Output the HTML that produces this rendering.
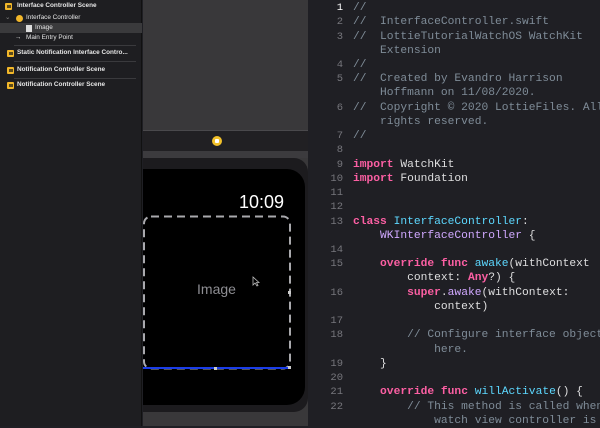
<!DOCTYPE html>
<html><head><meta charset="utf-8"><style>
*{margin:0;padding:0;box-sizing:border-box}
body{width:600px;height:426px;overflow:hidden;background:#1f1f24;position:relative;font-family:"Liberation Sans",sans-serif}
.side{position:absolute;left:0;top:0;width:142px;height:426px;background:#1e1e21;border-right:1px solid #111}
.row{position:absolute;left:0;width:142px;height:10px;font-size:6.4px;color:#e6e6e6;line-height:10px;white-space:nowrap;font-weight:bold}
.ic{position:absolute;width:7px;height:7px;top:1.5px;background:#f2b72a;border-radius:1px}
.ic::after{content:"";position:absolute;left:1.5px;top:2px;width:4px;height:3px;background:#5b4a1a}
.sep{position:absolute;left:14px;width:122px;height:1px;background:#3a3a3d}
.canvas{position:absolute;left:143px;top:0;width:165px;height:426px;background:#39383a}
.code{position:absolute;left:309px;top:1px;width:291px;height:426px;background:#1f1f24;font-family:"Liberation Mono",monospace;font-size:11.27px;color:#dfdfe0}
.l{position:absolute;left:0;height:14.23px;line-height:14.23px;white-space:pre}
.n{position:absolute;width:34px;text-align:right;color:#76767c;font-size:10.5px}
.c{color:#7f8c98}.k{color:#fc5fa3;font-weight:bold}.t{color:#5dd8ff}.p{color:#d0a8ff}.f{color:#67b7a4}
</style></head><body>
<div class="side">
 <div class="row" style="top:1px"><span class="ic" style="left:5px"></span><span style="position:absolute;left:17px">Interface Controller Scene</span></div>
 <div class="row" style="top:13px;font-weight:normal"><span style="position:absolute;left:5px;color:#888">⌄</span><span style="position:absolute;left:16px;top:1.5px;width:7px;height:7px;border-radius:50%;background:#f2b72a"></span><span style="position:absolute;left:26px">Interface Controller</span></div>
 <div class="row" style="top:23px;background:#3a3a3c;font-weight:normal"><span style="position:absolute;left:26px;top:1.5px;width:6px;height:7px;background:#ddd"></span><span style="position:absolute;left:35px">Image</span></div>
 <div class="row" style="top:33px;font-weight:normal"><span style="position:absolute;left:15px">→</span><span style="position:absolute;left:26px">Main Entry Point</span></div>
 <div class="sep" style="top:45px"></div>
 <div class="row" style="top:48px"><span class="ic" style="left:7px"></span><span style="position:absolute;left:17px">Static Notification Interface Contro...</span></div>
 <div class="sep" style="top:61px"></div>
 <div class="row" style="top:65px"><span class="ic" style="left:7px"></span><span style="position:absolute;left:17px">Notification Controller Scene</span></div>
 <div class="sep" style="top:78px"></div>
 <div class="row" style="top:80px"><span class="ic" style="left:7px"></span><span style="position:absolute;left:17px">Notification Controller Scene</span></div>
</div>
<div class="canvas">
 <div style="position:absolute;left:0;top:130px;width:165px;height:21px;background:#212023;border-top:1px solid #4a494c"></div>
 <div style="position:absolute;left:69px;top:136px;width:10px;height:10px;border-radius:50%;background:#f2c12a"><div style="position:absolute;left:3px;top:3px;width:4px;height:4px;background:#fff;border-radius:1px"></div></div>
 <div style="position:absolute;left:0;top:151px;width:165px;height:7px;background:#3c3b3e"></div>
 <div style="position:absolute;left:0;top:158px;width:165px;height:254px;background:#1c1b1e;border-radius:0 14px 14px 0"></div>
 <div style="position:absolute;left:0;top:169px;width:162px;height:236px;background:#000;border-radius:0 18px 18px 0"></div>
 <div style="position:absolute;left:96px;top:192px;color:#fff;font-size:18px">10:09</div>
 <svg style="position:absolute;left:0;top:215px" width="150" height="156"><rect x="1" y="1.5" width="146" height="152" rx="7" fill="none" stroke="#a9a9ad" stroke-width="2" stroke-dasharray="8 5"/></svg>
 <div style="position:absolute;left:0;top:367px;width:148px;height:1.5px;background:#1a3de8"></div>
 <div style="position:absolute;left:145px;top:366px;width:3px;height:3px;background:#ccc"></div>
 <div style="position:absolute;left:71px;top:367px;width:3px;height:3px;background:#ccc"></div>
 <div style="position:absolute;left:145px;top:291px;width:3px;height:3px;background:#ccc"></div>
 <div style="position:absolute;left:0;top:281px;width:147px;text-align:center;color:#8e8e93;font-size:14px">Image</div>
 <svg style="position:absolute;left:109px;top:276px" width="8" height="11"><path d="M1 1 L1 9 L3 7 L5 10 L6 9.5 L4.5 6.5 L7 6.5 Z" fill="#000" stroke="#bbb" stroke-width="0.8"/></svg>
</div>
<div class="code">
<div class="l" style="top:0"><span class="n" style="color:#fff">1</span></div>
<div class="l" style="top:0;left:44px"><span class="c">//</span></div>
<div class="l" style="top:14.2px"><span class="n">2</span></div><div class="l c" style="top:14.2px;left:44px">//  InterfaceController.swift</div>
<div class="l" style="top:28.5px"><span class="n">3</span></div><div class="l c" style="top:28.5px;left:44px">//  LottieTutorialWatchOS WatchKit</div>
<div class="l c" style="top:42.7px;left:44px">    Extension</div>
<div class="l" style="top:56.9px"><span class="n">4</span></div><div class="l c" style="top:56.9px;left:44px">//</div>
<div class="l" style="top:71.2px"><span class="n">5</span></div><div class="l c" style="top:71.2px;left:44px">//  Created by Evandro Harrison</div>
<div class="l c" style="top:85.4px;left:44px">    Hoffmann on 11/08/2020.</div>
<div class="l" style="top:99.6px"><span class="n">6</span></div><div class="l c" style="top:99.6px;left:44px">//  Copyright © 2020 LottieFiles. All</div>
<div class="l c" style="top:113.8px;left:44px">    rights reserved.</div>
<div class="l" style="top:128.1px"><span class="n">7</span></div><div class="l c" style="top:128.1px;left:44px">//</div>
<div class="l" style="top:142.3px"><span class="n">8</span></div>
<div class="l" style="top:156.5px"><span class="n">9</span></div><div class="l" style="top:156.5px;left:44px"><span class="k">import</span> WatchKit</div>
<div class="l" style="top:170.8px"><span class="n">10</span></div><div class="l" style="top:170.8px;left:44px"><span class="k">import</span> Foundation</div>
<div class="l" style="top:185px"><span class="n">11</span></div>
<div class="l" style="top:199.2px"><span class="n">12</span></div>
<div class="l" style="top:213.5px"><span class="n">13</span></div><div class="l" style="top:213.5px;left:44px"><span class="k">class</span> <span class="t">InterfaceController</span>:</div>
<div class="l" style="top:227.7px;left:44px">    <span class="p">WKInterfaceController</span> {</div>
<div class="l" style="top:241.9px"><span class="n">14</span></div>
<div class="l" style="top:256.2px"><span class="n">15</span></div><div class="l" style="top:256.2px;left:44px">    <span class="k">override</span> <span class="k">func</span> <span class="t">awake</span>(withContext</div>
<div class="l" style="top:270.4px;left:44px">        context: <span class="k">Any</span>?) {</div>
<div class="l" style="top:284.6px"><span class="n">16</span></div><div class="l" style="top:284.6px;left:44px">        <span class="k">super</span>.<span class="p">awake</span>(withContext:</div>
<div class="l" style="top:298.8px;left:44px">            context)</div>
<div class="l" style="top:313.1px"><span class="n">17</span></div>
<div class="l" style="top:327.3px"><span class="n">18</span></div><div class="l c" style="top:327.3px;left:44px">        // Configure interface objects</div>
<div class="l c" style="top:341.5px;left:44px">            here.</div>
<div class="l" style="top:355.8px"><span class="n">19</span></div><div class="l" style="top:355.8px;left:44px">    }</div>
<div class="l" style="top:370px"><span class="n">20</span></div>
<div class="l" style="top:384.2px"><span class="n">21</span></div><div class="l" style="top:384.2px;left:44px">    <span class="k">override</span> <span class="k">func</span> <span class="t">willActivate</span>() {</div>
<div class="l" style="top:398.5px"><span class="n">22</span></div><div class="l c" style="top:398.5px;left:44px">        // This method is called when</div>
<div class="l c" style="top:412.7px;left:44px">            watch view controller is</div>
</div>
</body></html>
